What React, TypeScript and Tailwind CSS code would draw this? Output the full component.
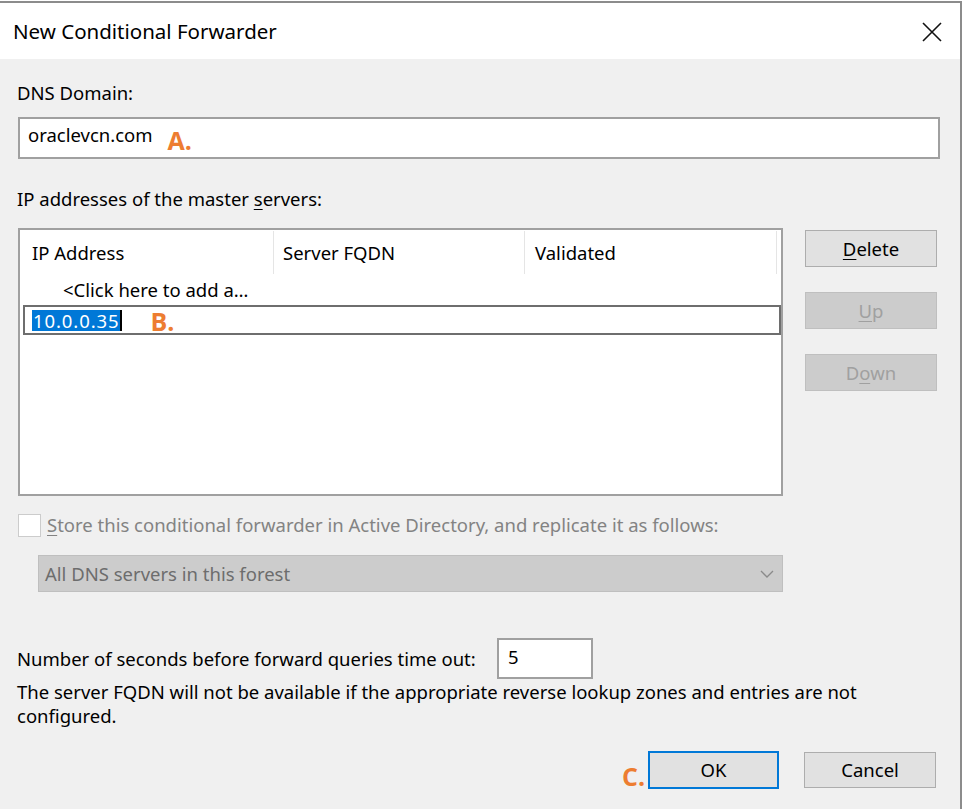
import React from "react";

const font = { fontFamily: '"Noto Sans", "Open Sans", sans-serif' };
const orange = { fontFamily: '"Open Sans", sans-serif' };

function Btn({ children, disabled, primary, className = "" }: { children: React.ReactNode; disabled?: boolean; primary?: boolean; className?: string }) {
  return (
    <div
      className={
        "flex items-center justify-center text-[18.5px] " +
        (disabled
          ? "bg-[#cccccc] border border-[#bfbfbf] text-[#a0a0a0] "
          : primary
          ? "bg-[#e1e1e1] border-2 border-[#0078d7] text-black "
          : "bg-[#e1e1e1] border border-[#adadad] text-black ") +
        className
      }
    >
      {children}
    </div>
  );
}

export default function App() {
  return (
    <div className="w-[968px] h-[812px] bg-white pt-[1px] overflow-hidden" style={font}>
      <div className="w-[962px] h-[808px] border-t-2 border-r-2 border-[#8c8c8c] flex flex-col">
        {/* Title bar */}
        <div className="h-[56px] bg-white flex items-center justify-between pl-[13px] pr-[18px] shrink-0">
          <span className="text-[20.5px] text-black">New Conditional Forwarder</span>
          <svg width="20" height="20" viewBox="0 0 20 20" className="mt-[1px]">
            <path d="M1 1 L19 19 M19 1 L1 19" stroke="#111" strokeWidth="1.6" />
          </svg>
        </div>
        {/* Body */}
        <div className="flex-1 bg-[#f0f0f0] pl-[17px] pt-[22px] text-black text-[18.5px] leading-[24px]">
          <div>DNS Domain:</div>
          <div className="mt-[12px] ml-[1px] w-[922px] h-[42px] bg-white border-2 border-[#a0a0a0] flex items-center pl-[8px]">
            <span className="-mt-[6px]">oraclevcn.com</span>
            <span className="ml-[15px] text-[#ed7d31] font-bold text-[25px] leading-none mt-[4px]" style={orange}>A.</span>
          </div>
          <div className="mt-[28px]">
            IP addresses of the master <span className="underline underline-offset-[3px]">s</span>ervers:
          </div>
          <div className="flex mt-[17px]">
            {/* List view */}
            <div className="ml-[1px] w-[765px] h-[268px] bg-white border-2 border-[#a0a0a0] pl-[2px] pt-[1px]">
              <div className="flex h-[43px] items-center">
                <div className="w-[252px] h-full flex items-center pl-[10px] border-r border-[#e5e5e5]">IP Address</div>
                <div className="w-[251px] h-full flex items-center pl-[9px] border-r border-[#e5e5e5]">Server FQDN</div>
                <div className="w-[252px] h-full flex items-center pl-[10px] border-r border-[#e5e5e5]">Validated</div>
              </div>
              <div className="pl-[41px] mt-[4px] h-[24px]">&lt;Click here to add a…</div>
              <div className="mt-[3px] ml-[1px] w-[758px] h-[30px] border-2 border-[#6e6e6e] flex items-center pl-[7px]">
                <span className="bg-[#0078d7] text-white leading-[21px] px-[1px] tracking-[0.9px]">10.0.0.35</span>
                <span className="w-[2px] h-[21px] bg-black"></span>
                <span className="ml-[28px] text-[#ed7d31] font-bold text-[25px] leading-none mt-[2px]" style={orange}>B.</span>
              </div>
            </div>
            {/* Buttons */}
            <div className="ml-[22px] mt-[2px] flex flex-col gap-[25px]">
              <Btn className="w-[132px] h-[37px]">
                <span><span className="underline underline-offset-[3px]">D</span>elete</span>
              </Btn>
              <Btn disabled className="w-[132px] h-[37px]">
                <span><span className="underline underline-offset-[3px]">U</span>p</span>
              </Btn>
              <Btn disabled className="w-[132px] h-[37px]">
                <span>D<span className="underline underline-offset-[3px]">o</span>wn</span>
              </Btn>
            </div>
          </div>
          {/* Checkbox */}
          <div className="flex items-center mt-[17px] ml-[1px]">
            <div className="w-[23px] h-[23px] bg-white border border-[#cccccc]"></div>
            <span className="ml-[6px] text-[#838383]">
              <span className="underline underline-offset-[3px]">S</span>tore this conditional forwarder in Active Directory, and replicate it as follows:
            </span>
          </div>
          {/* Dropdown */}
          <div className="ml-[21px] mt-[18px] w-[745px] h-[37px] bg-[#cccccc] border border-[#bfbfbf] flex items-center justify-between pl-[6px] pr-[8px] text-[#6d6d6d]">
            <span>All DNS servers in this forest</span>
            <svg width="14" height="8" viewBox="0 0 14 8">
              <path d="M1 1 L7 7 L13 1" stroke="#8a8a8a" strokeWidth="1.3" fill="none" />
            </svg>
          </div>
          {/* Timeout */}
          <div className="flex items-center mt-[47px]">
            <span>Number of seconds before forward queries time out:</span>
            <div className="ml-auto mr-[367px] w-[96px] h-[41px] bg-white border-2 border-[#a0a0a0] flex items-center pl-[9px] -mt-[1px]">
              <span className="-mt-[4px]">5</span>
            </div>
          </div>
          <div className="mt-[1px] w-[870px]">
            The server FQDN will not be available if the appropriate reverse lookup zones and entries are not configured.
          </div>
          {/* Bottom buttons */}
          <div className="flex items-end mt-[23px]">
            <span className="ml-[605px] text-[#ed7d31] font-bold text-[25px] leading-none" style={orange}>C.</span>
            <Btn primary className="w-[131px] h-[38px] ml-[3px]">OK</Btn>
            <Btn className="w-[132px] h-[36px] ml-[25px] mb-[1px]">Cancel</Btn>
          </div>
        </div>
      </div>
    </div>
  );
}
